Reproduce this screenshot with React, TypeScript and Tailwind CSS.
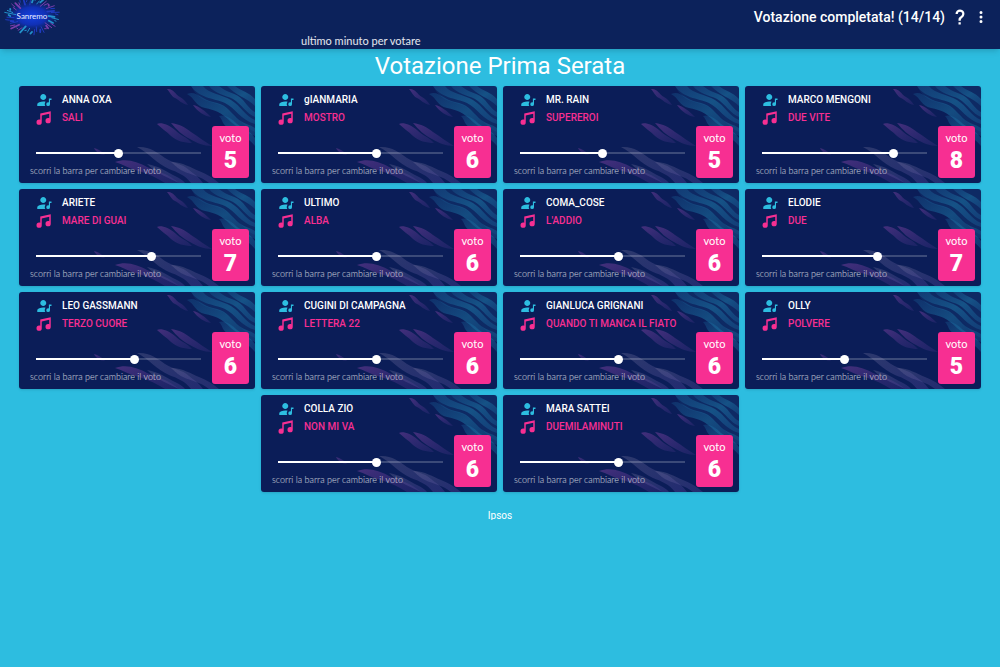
import { useState } from "react";

interface Song {
  artist: string;
  title: string;
  vote: number;
}

const SONGS: Song[] = [
  { artist: "ANNA OXA", title: "SALI", vote: 5 },
  { artist: "gIANMARIA", title: "MOSTRO", vote: 6 },
  { artist: "MR. RAIN", title: "SUPEREROI", vote: 5 },
  { artist: "MARCO MENGONI", title: "DUE VITE", vote: 8 },
  { artist: "ARIETE", title: "MARE DI GUAI", vote: 7 },
  { artist: "ULTIMO", title: "ALBA", vote: 6 },
  { artist: "COMA_COSE", title: "L'ADDIO", vote: 6 },
  { artist: "ELODIE", title: "DUE", vote: 7 },
  { artist: "LEO GASSMANN", title: "TERZO CUORE", vote: 6 },
  { artist: "CUGINI DI CAMPAGNA", title: "LETTERA 22", vote: 6 },
  { artist: "GIANLUCA GRIGNANI", title: "QUANDO TI MANCA IL FIATO", vote: 6 },
  { artist: "OLLY", title: "POLVERE", vote: 5 },
  { artist: "COLLA ZIO", title: "NON MI VA", vote: 6 },
  { artist: "MARA SATTEI", title: "DUEMILAMINUTI", vote: 6 },
];

const ICONS = {
  artist:
    "M11,14C12,14 13.05,14.16 14.2,14.44C13.39,15.31 13,16.33 13,17.5C13,18.39 13.25,19.23 13.78,20H3V18C3,16.81 3.91,15.85 5.74,15.12C7.57,14.38 9.33,14 11,14M11,12C9.92,12 9,11.61 8.18,10.83C7.38,10.05 7,9.11 7,8C7,6.92 7.38,6 8.18,5.18C9,4.38 9.92,4 11,4C12.11,4 13.05,4.38 13.83,5.18C14.61,6 15,6.92 15,8C15,9.11 14.61,10.05 13.83,10.83C13.05,11.61 12.11,12 11,12M18.5,10H22V12H20V17.5A2.5,2.5 0 0,1 17.5,20A2.5,2.5 0 0,1 15,17.5A2.5,2.5 0 0,1 17.5,15C17.86,15 18.19,15.07 18.5,15.21V10Z",
  music:
    "M21,3V15.5A3.5,3.5 0 0,1 17.5,19A3.5,3.5 0 0,1 14,15.5A3.5,3.5 0 0,1 17.5,12C18.04,12 18.55,12.12 19,12.34V6.47L9,8.6V17.5A3.5,3.5 0 0,1 5.5,21A3.5,3.5 0 0,1 2,17.5A3.5,3.5 0 0,1 5.5,14C6.04,14 6.55,14.12 7,14.34V6L21,3Z",
  help: "M10,19H13V22H10V19M12,2C17.35,2.22 19.68,7.62 16.5,11.67C15.67,12.67 14.33,13.33 13.67,14.17C13,15 13,16 13,17H10C10,15.33 10,13.92 10.67,12.92C11.33,11.92 12.67,11.33 13.5,10.67C15.92,8.43 15.32,5.26 12,5A3,3 0 0,0 9,8H6A6,6 0 0,1 12,2Z",
  dots: "M12,16A2,2 0 0,1 14,18A2,2 0 0,1 12,20A2,2 0 0,1 10,18A2,2 0 0,1 12,16M12,10A2,2 0 0,1 14,12A2,2 0 0,1 12,14A2,2 0 0,1 10,12A2,2 0 0,1 12,10M12,4A2,2 0 0,1 14,6A2,2 0 0,1 12,8A2,2 0 0,1 10,6A2,2 0 0,1 12,4Z",
};

function Icon({ path, className }: { path: string; className?: string }) {
  return (
    <svg viewBox="0 0 24 24" fill="currentColor" aria-hidden="true" className={`size-[18px] shrink-0 ${className ?? ""}`}>
      <path d={path} />
    </svg>
  );
}

const RAY_COLORS = ["#27a4dc", "#2a5fe0", "#8d43b8", "#3cc4dc", "#2340d0", "#6a3ab8"];

function Logo() {
  return (
    <svg viewBox="0 0 62 36" className="h-9 w-[62px]" role="img" aria-label="Sanremo">
      <defs>
        <radialGradient id="logo-glow">
          <stop offset="0" stopColor="#1440e0" />
          <stop offset="0.5" stopColor="#1030b4" />
          <stop offset="1" stopColor="#0c225b" stopOpacity="0" />
        </radialGradient>
      </defs>
      <ellipse cx="32" cy="16" rx="29" ry="18" fill="url(#logo-glow)" />
      {/* rays, cut off by the top edge of the bar */}
      {Array.from({ length: 48 }, (_, i) => {
        const a = (i / 48) * Math.PI * 2;
        const inner = 0.66 + ((i * 7) % 5) * 0.07;
        const outer = 0.9 + ((i * 5) % 7) * 0.035;
        return (
          <line
            key={i}
            x1={32 + Math.cos(a) * 25 * inner}
            y1={16 + Math.sin(a) * 17 * inner}
            x2={32 + Math.cos(a + 0.06) * 25 * outer}
            y2={16 + Math.sin(a + 0.06) * 17 * outer}
            stroke={RAY_COLORS[(i * 5 + (i % 4)) % RAY_COLORS.length]}
            strokeWidth={i % 3 === 0 ? 1.8 : 1}
            strokeLinecap="round"
            opacity="0.85"
          />
        );
      })}
      <text x="32" y="19" textAnchor="middle" fill="#e8ecff" fontSize="8" fontFamily="Lato, sans-serif">
        Sanremo
      </text>
    </svg>
  );
}

function CardArtwork() {
  return (
    <svg
      viewBox="0 0 236 97"
      preserveAspectRatio="xMaxYMid slice"
      aria-hidden="true"
      className="absolute inset-0 size-full"
    >
      <defs>
        <linearGradient id="wave-teal" x1="0" y1="0" x2="1" y2="1">
          <stop offset="0" stopColor="#1d6ea6" stopOpacity="0.25" />
          <stop offset="0.5" stopColor="#1d7aa8" stopOpacity="0.5" />
          <stop offset="1" stopColor="#1d6ea6" stopOpacity="0.3" />
        </linearGradient>
        <linearGradient id="wave-purple" x1="0" y1="0" x2="1" y2="1">
          <stop offset="0" stopColor="#8a45a8" stopOpacity="0.45" />
          <stop offset="1" stopColor="#5a3c9a" stopOpacity="0.2" />
        </linearGradient>
        <linearGradient id="wave-grey" x1="0" y1="0" x2="1" y2="1">
          <stop offset="0" stopColor="#7a7aa0" stopOpacity="0.3" />
          <stop offset="1" stopColor="#5a4ca8" stopOpacity="0.3" />
        </linearGradient>
      </defs>
      <path d="M172 0H236V46C222 40 214 22 198 18C186 15 178 12 172 0Z" fill="#1d6ea6" opacity="0.16" />
      <g fill="url(#wave-teal)">
        <path d="M168 8C178 4 182 14 194 16C206 18 210 24 218 32C224 38 230 38 236 42V50C226 46 220 42 212 36C202 26 196 24 186 22C176 20 176 12 168 8Z" />
        <path d="M172 0H184C190 8 202 8 212 14C222 20 226 30 236 34V38C222 34 216 22 206 17C194 12 180 12 172 0Z" />
        <path d="M190 0H200C208 7 218 7 224 14C229 20 232 24 236 26V31C228 28 222 18 214 13C206 9 196 8 190 0Z" />
        <path d="M208 0H216C222 5 230 6 236 13V20C228 12 216 9 208 0Z" />
        <path d="M200 30C206 28 212 32 218 38C224 42 230 44 236 52V60C228 50 216 46 208 41C203 38 204 34 200 30Z" />
      </g>
      <g fill="url(#wave-purple)">
        <path d="M148 3C154 2 156 8 161 11C165 13 167 16 169 19C163 18 160 14 156 12C152 10 151 6 148 3Z" />
        <path d="M138 38C142 36 150 39 156 44C162 50 168 51 173 57C165 57 158 55 152 50C147 45 142 42 138 38Z" />
        <path d="M152 37C160 38 166 41 172 46C180 51 186 56 193 60C184 60 178 57 171 53C163 49 158 44 152 37Z" />
        <path d="M174 19C180 20 186 25 192 31C185 30 179 26 174 19Z" />
        <path d="M96 76C108 72 118 76 128 81C140 86 150 88 160 97H146C138 92 130 88 120 85C110 83 104 78 96 76Z" />
        <path d="M75 62C79 63 83 65 86 69C81 69 77 66 75 62Z" />
      </g>
      <g fill="url(#wave-grey)">
        <path d="M118 61C130 60 138 66 146 72C154 77 164 78 170 84C175 88 180 91 184 97H172C166 89 158 86 150 83C138 78 130 67 118 61Z" />
        <path d="M152 76C164 76 172 82 180 85C188 88 194 92 200 97H190C182 90 172 89 164 85C158 82 156 79 152 76Z" />
        <path d="M128 78C140 80 148 86 156 90C160 92 164 94 166 97H160C152 93 138 88 128 78Z" />
      </g>
    </svg>
  );
}

function SongCard({ song }: { song: Song }) {
  const [vote, setVote] = useState(song.vote);
  return (
    <article className="relative flex basis-[calc((100%-18px)/4)] justify-between overflow-hidden rounded-[3px] bg-[#0b1d58] pr-[6px] pb-[5px] pl-[11px] shadow">
      <CardArtwork />
      <div className="relative pt-[5px]">
        <h2 className="flex items-center gap-[9px] pl-[5px] text-[10px] leading-[18px] font-medium whitespace-nowrap text-white">
          <Icon path={ICONS.artist} className="text-[#2dbde0]" />
          {song.artist}
        </h2>
        <p className="flex items-center gap-[9px] pl-[5px] text-[10px] leading-[18px] font-medium whitespace-nowrap text-[#f72f92]">
          <Icon path={ICONS.music} />
          {song.title}
        </p>
        <label className="mt-[21px] block">
          <span className="relative ml-[6px] block h-[10px] w-[165px]">
            <span className="absolute inset-x-0 top-1 h-[2px] bg-white/20" />
            <span className="absolute top-1 left-0 h-[2px] bg-white" style={{ width: `${vote * 10}%` }} />
            <input
              type="range"
              min={0}
              max={10}
              value={vote}
              onChange={(e) => setVote(Number(e.target.value))}
              className="absolute top-0 -left-1 h-[10px] w-[173px] cursor-pointer appearance-none bg-transparent [&::-webkit-slider-thumb]:size-[9px] [&::-webkit-slider-thumb]:appearance-none [&::-webkit-slider-thumb]:rounded-full [&::-webkit-slider-thumb]:bg-white"
            />
          </span>
          <span className="mt-[6px] block font-[Lato,sans-serif] text-[9px] leading-[14px] font-light text-white/80">
            scorri la barra per cambiare il voto
          </span>
        </label>
      </div>
      <div className="relative flex h-[52px] w-[37px] flex-col items-center self-end rounded-[3px] bg-[#f72f92] pt-[5px] text-white">
        <span className="font-[Lato,sans-serif] text-[11px] leading-[14px]">voto</span>
        <output className="text-[23px] leading-[32px] font-black">{vote}</output>
      </div>
    </article>
  );
}

export default function App() {
  return (
    <div className="min-h-screen bg-[#2dbde0] font-[Roboto,sans-serif]">
      <header className="relative flex h-[49px] items-start justify-between bg-[#0c225b] text-white shadow-md">
        <div className="flex items-start">
          <Logo />
          <p className="ml-[239px] pt-[34px] font-[Lato,sans-serif] text-[11px] leading-[14px] text-white/90">
            ultimo minuto per votare
          </p>
        </div>
        <div className="flex items-center pt-2 pr-[10px]">
          <p className="text-[14px] leading-[18px] font-medium">Votazione completata! (14/14)</p>
          <button type="button" aria-label="Aiuto" className="ml-[6px]">
            <Icon path={ICONS.help} />
          </button>
          <button type="button" aria-label="Menu" className="ml-[3px]">
            <Icon path={ICONS.dots} />
          </button>
        </div>
      </header>

      <main className="px-[19px]">
        <h1 className="pt-[2px] text-center text-[24px] leading-[30px] text-white">Votazione Prima Serata</h1>
        <div className="mt-[5px] flex flex-wrap justify-center gap-[6px]">
          {SONGS.map((song) => (
            <SongCard key={song.artist} song={song} />
          ))}
        </div>
      </main>

      <footer className="mt-[17px] h-[11px] overflow-hidden text-center text-[10px] leading-[14px] text-white">Ipsos</footer>
    </div>
  );
}
